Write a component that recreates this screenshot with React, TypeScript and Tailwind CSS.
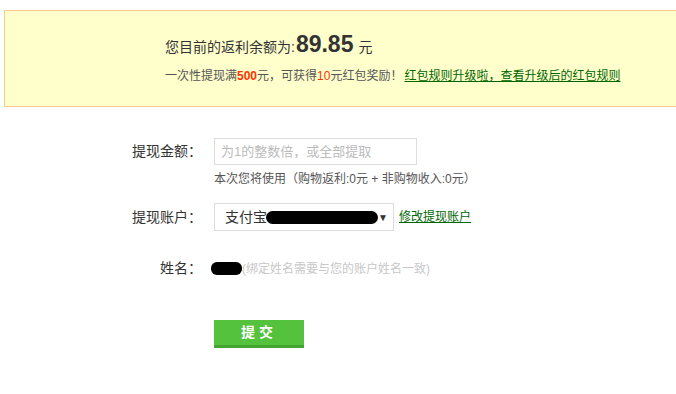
const cjk = { fontFamily: '"Liberation Sans", "Noto Sans CJK SC", sans-serif' };

function Blob({ className }: { className: string }) {
  return <span className={`inline-block shrink-0 bg-black ${className}`} />;
}

export default function App() {
  return (
    <div className="w-[676px] h-[394px] overflow-hidden bg-white text-[#333]" style={cjk}>
      <div className="pt-[10px] pl-[4px]">
        <div className="w-[690px] h-[97px] border border-[#ffc891] bg-[#ffffcc] pl-[160px] pt-[16px]">
          <div className="flex items-baseline h-[30px]">
            <span className="text-[14px] text-[#333]">您目前的返利余额为:</span>
            <span className="text-[23px] font-bold text-[#333] ml-[1px]">89.85</span>
            <span className="text-[14px] text-[#333] ml-[5px]">元</span>
          </div>
          <div className="mt-[11px] text-[12px] text-[#555] leading-[16px]">
            一次性提现满<span className="text-[#ff3300] font-bold">500</span>元，可获得
            <span className="text-[#ff3300]">10</span>元红包奖励！
            <a href="#" className="ml-[2px] text-[#006600] underline">红包规则升级啦，查看升级后的红包规则</a>
          </div>
        </div>
      </div>

      <div className="mt-[31px] flex flex-col">
        <div className="flex items-center">
          <div className="w-[214px] shrink-0 pr-[12px] text-right text-[14px]">提现金额：</div>
          <div className="w-[203px] h-[27px] border border-[#dcdcdc] flex items-center pl-[6px] text-[13px] text-[#bbb]">
            为1的整数倍，或全部提取
          </div>
        </div>
        <div className="pl-[214px] mt-[6px] text-[12px] text-[#555] leading-[16px]">
          本次您将使用（购物返利:0元 + 非购物收入:0元）
        </div>

        <div className="flex items-center mt-[16px]">
          <div className="w-[214px] shrink-0 pr-[12px] text-right text-[14px]">提现账户：</div>
          <div className="w-[180px] shrink-0 h-[28px] border border-[#dcdcdc] flex items-center pl-[10px] pr-[6px] text-[14px] whitespace-nowrap">
            <span>支付宝</span>
            <Blob className="w-[112px] h-[13px] rounded-full -ml-[1px]" />
            <span className="ml-auto text-[10px]">▼</span>
          </div>
          <a href="#" className="ml-[5px] text-[12px] text-[#006600] underline whitespace-nowrap">修改提现账户</a>
        </div>

        <div className="flex items-center mt-[27px]">
          <div className="w-[214px] shrink-0 pr-[12px] text-right text-[14px]">姓名：</div>
          <Blob className="-ml-[3px] w-[31px] h-[13px] rounded-[6px]" />
          <span className="text-[12px] text-[#c8c8c8] whitespace-nowrap">(绑定姓名需要与您的账户姓名一致)</span>
        </div>

        <div className="pl-[214px] mt-[41px]">
          <button className="w-[90px] h-[28px] bg-[#55c23e] border-b-[3px] border-[#43a52f] text-white text-[14px] font-bold tracking-[4px]">
            提交
          </button>
        </div>
      </div>
    </div>
  );
}
